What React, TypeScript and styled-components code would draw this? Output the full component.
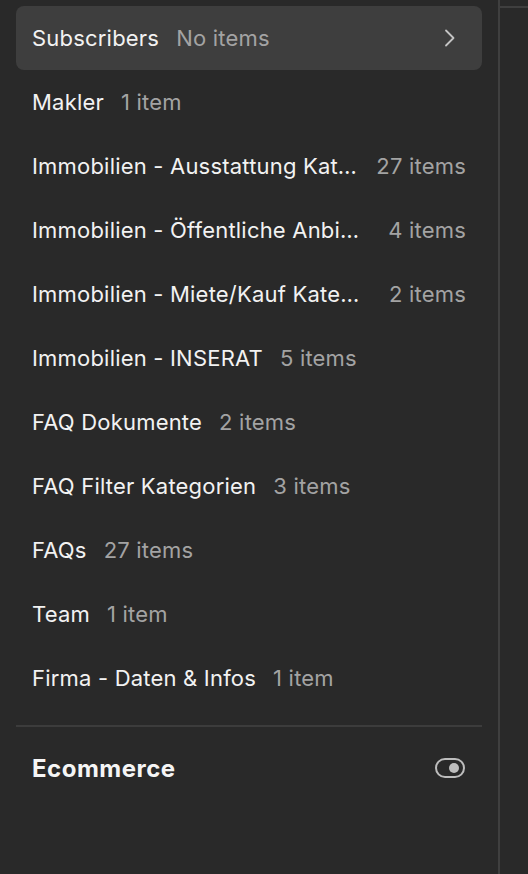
import React from "react";
import styled, { createGlobalStyle } from "styled-components";

const Global = createGlobalStyle`
  html, body { margin: 0; padding: 0; background: #292929; }
  body { font-family: Inter, "Noto Sans", sans-serif; -webkit-font-smoothing: antialiased; }
`;

const Layout = styled.div`
  display: flex;
  width: 528px;
  height: 874px;
  background: #292929;
  overflow: hidden;
`;

const Panel = styled.div`
  width: 498px;
  flex: none;
  box-sizing: border-box;
  padding: 6px 16px 0 16px;
  display: flex;
  flex-direction: column;
`;

const Split = styled.div`
  width: 2px;
  flex: none;
  background: #3f3f3f;
`;

const Side = styled.div`
  flex: 1;
  margin-top: 6px;
  border-top: 2px solid #3f3f3f;
`;

const Row = styled.div<{ $active?: boolean }>`
  height: 64px;
  display: flex;
  align-items: center;
  padding: 0 16px;
  border-radius: 8px;
  background: ${(p) => (p.$active ? "#3e3e3e" : "transparent")};
  font-size: 22px;
  line-height: 26px;
  letter-spacing: 0.2px;
  min-width: 0;
`;

const Name = styled.span`
  color: #f2f2f2;
  white-space: nowrap;
  overflow: hidden;
  text-overflow: ellipsis;
  min-width: 0;
  flex: 0 1 auto;
`;

const Count = styled.span`
  color: #a3a3a3;
  white-space: nowrap;
  flex: none;
  margin-left: 17px;
`;

const Spacer = styled.span`
  flex: 1;
`;

const Chevron = styled.svg`
  flex: none;
  margin-right: 10px;
`;

const Divider = styled.div`
  height: 2px;
  background: #3c3c3c;
  margin-top: 15px;
`;

const Section = styled.div`
  height: 82px;
  display: flex;
  align-items: center;
  justify-content: space-between;
  padding: 0 16px;
`;

const SectionTitle = styled.span`
  font-size: 24px;
  font-weight: 700;
  color: #f5f5f5;
  letter-spacing: 0.5px;
`;

const Toggle = styled.svg`
  flex: none;
  margin-right: 1px;
`;

const items: { name: string; count: string }[] = [
  { name: "Makler", count: "1 item" },
  { name: "Immobilien - Ausstattung Kategorien", count: "27 items" },
  { name: "Immobilien - Öffentliche Anbindungen", count: "4 items" },
  { name: "Immobilien - Miete/Kauf Kategorien", count: "2 items" },
  { name: "Immobilien - INSERAT", count: "5 items" },
  { name: "FAQ Dokumente", count: "2 items" },
  { name: "FAQ Filter Kategorien", count: "3 items" },
  { name: "FAQs", count: "27 items" },
  { name: "Team", count: "1 item" },
  { name: "Firma - Daten & Infos", count: "1 item" },
];

export default function App() {
  return (
    <>
      <Global />
      <Layout>
        <Panel>
          <Row $active>
            <Name>Subscribers</Name>
            <Count>No items</Count>
            <Spacer />
            <Chevron width="12" height="18" viewBox="0 0 12 18">
              <polyline
                points="2,1.5 9.5,9 2,16.5"
                fill="none"
                stroke="#c4c4c4"
                strokeWidth="1.8"
                strokeLinecap="round"
                strokeLinejoin="round"
              />
            </Chevron>
          </Row>
          {items.map((it) => (
            <Row key={it.name}>
              <Name>{it.name}</Name>
              <Count>{it.count}</Count>
            </Row>
          ))}
          <Divider />
          <Section>
            <SectionTitle>Ecommerce</SectionTitle>
            <Toggle width="30" height="21" viewBox="0 0 30 21">
              <rect x="1" y="1" width="28" height="18" rx="9" fill="none" stroke="#bdbdbd" strokeWidth="2" />
              <circle cx="19" cy="10" r="5" fill="#bdbdbd" />
            </Toggle>
          </Section>
        </Panel>
        <Split />
        <Side />
      </Layout>
    </>
  );
}
